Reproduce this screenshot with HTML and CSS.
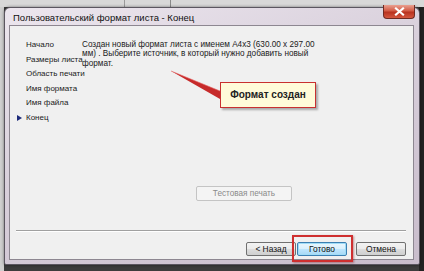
FILE: index.html
```html
<!DOCTYPE html>
<html lang="ru">
<head>
	<meta charset="UTF-8">
	<title>Пользовательский формат листа - Конец</title>
	<link rel="stylesheet" href="styles.css">
</head>
<body>
	<div id="screen">
		<div class="window">
			<!-- Title bar -->
			<div class="titlebar">
				<span class="title">Пользовательский формат листа - Конец</span>
				<span class="closeBtn">
					<svg width="11" height="9" viewBox="0 0 11 9">
						<path d="M2 1.5 L9 7.5 M9 1.5 L2 7.5" stroke="#fff" stroke-width="2.2" stroke-linecap="square"/>
					</svg>
				</span>
			</div>

			<!-- Client area -->
			<div class="client">
				<div class="main">
					<ul class="steps">
						<li>Начало</li>
						<li>Размеры листа</li>
						<li>Область печати</li>
						<li>Имя формата</li>
						<li>Имя файла</li>
						<li class="current">Конец</li>
					</ul>
					<div class="content">
						<p class="desc">Создан новый формат листа с именем A4x3 (630.00 x 297.00<br>мм) . Выберите источник, в который нужно добавить новый<br>формат.</p>
						<button class="testBtn" disabled>Тестовая печать</button>
					</div>
				</div>
				<div class="separator"></div>
				<div class="buttons">
					<button class="btn">&lt; Назад</button>
					<span class="highlight">
						<button class="btn default">Готово</button>
					</span>
					<button class="btn cancel">Отмена</button>
				</div>

				<!-- Annotation over the dialog -->
				<svg class="pointer" width="60" height="40" viewBox="0 0 60 40">
					<path d="M1 1 L50 21 L50 29 Z" fill="#c62a2a"/>
					<path d="M1 1 L50 21" stroke="#e56060" stroke-width="0.6"/>
				</svg>
				<div class="callout">Формат создан</div>
			</div>
		</div>
	</div>
</body>
</html>
```

FILE: styles.css
```css
* {
	box-sizing: border-box;
}
body {
	margin: 0;
	font-family: "Liberation Sans", Arial, sans-serif;
	overflow: hidden;
}
#screen {
	width: 424px;
	height: 271px;
	padding: 7px 4px 6px 4px;
	background:
		linear-gradient(to right, transparent 124px, #9a9a9a 124px, #9a9a9a 125px, transparent 125px, transparent 170px, #8a8a8a 170px, #8a8a8a 171px, transparent 171px) top / 100% 7px no-repeat,
		linear-gradient(to bottom, #d8d8d8 0, #d8d8d8 7px, transparent 7px),
		linear-gradient(to right, #cfcfcf 0, #cfcfcf 4px, #3c3c3c 4px, #3c3c3c 419px, #222 419px);
}
.window {
	height: 258px;
	display: flex;
	flex-direction: column;
	padding: 0 5px 4px 4px;
	border: 1px solid #5b5660;
	border-radius: 6px 6px 2px 2px;
	background: linear-gradient(160deg, #ece6ee 0%, #d8cfdb 45%, #c9bdcc 100%);
	box-shadow: 0 0 3px rgba(0, 0, 0, 0.5);
}
.titlebar {
	height: 17px;
	display: flex;
	align-items: center;
	justify-content: space-between;
	padding-left: 4px;
}
.title {
	font-size: 9.5px;
	color: #111;
	padding-top: 2px;
}
.closeBtn {
	align-self: flex-start;
	margin-top: -3px;
	margin-right: -1px;
	width: 32px;
	height: 14px;
	display: flex;
	align-items: center;
	justify-content: center;
	border: 1px solid #6e2a22;
	border-top: none;
	border-radius: 0 0 4px 4px;
	background: linear-gradient(to bottom, #e9a090 0%, #d25a44 45%, #b8321f 55%, #d4563e 100%);
}
.client {
	position: relative;
	flex: 1;
	display: flex;
	flex-direction: column;
	background-color: #f0f0f0;
	border: 1px solid #8d8791;
	font-size: 8.2px;
	color: #1a1a1a;
}
.main {
	flex: 1;
	display: flex;
	padding: 12px 7px 0 7px;
}
.steps {
	list-style: none;
	margin: 0;
	padding: 0;
	width: 65px;
	flex-shrink: 0;
	font-size: 8px;
}
.steps li {
	height: 14.6px;
	line-height: 14.6px;
	padding-left: 9px;
	position: relative;
	white-space: nowrap;
}
.steps li.current::before {
	content: "";
	position: absolute;
	left: 0;
	top: 4px;
	border-left: 5px solid #1c2a7a;
	border-top: 3.5px solid transparent;
	border-bottom: 3.5px solid transparent;
}
.content {
	flex: 1;
	display: flex;
	flex-direction: column;
	align-items: center;
}
.desc {
	margin: 2px 0 0 0;
	align-self: flex-start;
	line-height: 9.3px;
	white-space: nowrap;
}
.testBtn {
	margin-top: auto;
	margin-bottom: 29px;
	width: 96px;
	height: 15px;
	padding: 0;
	font-family: inherit;
	font-size: 8.2px;
	color: #8a8a8a;
	background: #f4f4f4;
	border: 1px solid #c4c4c4;
	border-radius: 2px;
}
.separator {
	height: 2px;
	margin: 0 7px 0 6px;
	border-top: 1px solid #a0a0a0;
	border-bottom: 1px solid #fff;
}
.buttons {
	display: flex;
	justify-content: flex-end;
	padding: 10px 7px 0 0;
	height: 27px;
}
.btn {
	width: 50px;
	height: 14px;
	padding: 0;
	font-family: inherit;
	font-size: 8.4px;
	color: #111;
	border: 1px solid #707070;
	border-radius: 2px;
	background: linear-gradient(to bottom, #f2f2f2 0%, #ebebeb 50%, #dddddd 51%, #cfcfcf 100%);
}
.highlight {
	margin-left: 1px;
	position: relative;
}
.highlight::after {
	content: "";
	position: absolute;
	left: -5px;
	right: -6px;
	top: -7px;
	bottom: -3px;
	border: 2px solid #cf2f2f;
	box-shadow: 1px 1px 2px rgba(120, 0, 0, 0.4);
}
.btn.default {
	display: block;
	border-color: #3c7fb1;
	background: linear-gradient(to bottom, #eaf6fd 0%, #d9f0fc 50%, #bee6fd 51%, #a7d9f5 100%);
	box-shadow: inset 0 0 0 1px #9fdcf7;
}
.btn.cancel {
	margin-left: 9px;
}
.pointer {
	position: absolute;
	left: 160px;
	top: 44px;
}
.callout {
	position: absolute;
	left: 210px;
	top: 56px;
	width: 96px;
	height: 26px;
	line-height: 23px;
	text-align: center;
	font-size: 10px;
	font-weight: bold;
	color: #222;
	background: #fffbd9;
	border: 1.5px solid #c83030;
	box-shadow: 2px 2px 2px rgba(0, 0, 0, 0.3);
}
```
